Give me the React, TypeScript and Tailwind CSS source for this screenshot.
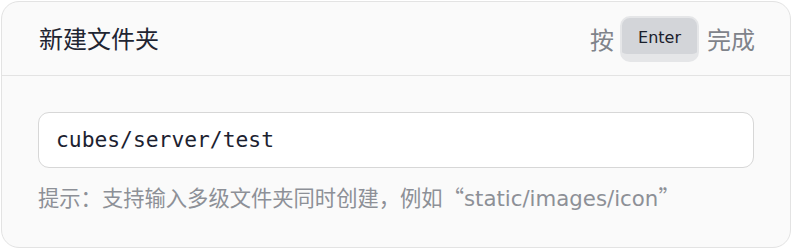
export default function App() {
  return (
    <div className="h-[249px] w-[792px] bg-white p-px font-['DejaVu_Sans','Noto_Sans_CJK_SC',sans-serif]">
      <div className="flex h-full flex-col rounded-[18px] border border-[#e3e3e3] bg-[#fafafa]">
        {/* Header */}
        <header className="flex h-[74px] shrink-0 items-center justify-between border-b border-[#e3e3e3] pr-[35px] pl-[37px]">
          <span className="pb-[2px] font-['Noto_Sans_CJK_SC',sans-serif] text-[24px] leading-none text-[#1f2532]">新建文件夹</span>
          <div className="flex items-center gap-[6px] font-['Noto_Sans_CJK_SC',sans-serif] text-[24px] leading-none text-[#7f838a]">
            <span>按</span>
            <kbd className="flex h-[46px] w-[79px] items-center justify-center rounded-[10px] border-2 border-b-[8px] border-[#e5e6e8] bg-[#d3d5d9] pt-[4px] font-['DejaVu_Sans',sans-serif] text-[16px] text-[#1a202c]">
              Enter
            </kbd>
            <span className="ml-[2px]">完成</span>
          </div>
        </header>

        {/* Body */}
        <div className="px-[36px] pt-[36px]">
          <div className="flex h-[56px] items-center rounded-[11px] border border-[#d7d7d7] bg-white px-[17px]">
            <span className="font-['DejaVu_Sans_Mono',monospace] text-[21.3px] text-[#1c2230]">cubes/server/test</span>
          </div>
          <p className="mt-[13px] text-[21.3px] leading-[32px] text-[#8d9097]">
            <span className="font-['Noto_Sans_CJK_SC',sans-serif]">提示：支持输入多级文件夹同时创建，例如“</span>
            static/images/icon
            <span className="font-['Noto_Sans_CJK_SC',sans-serif]">”</span>
          </p>
        </div>
      </div>
    </div>
  );
}
